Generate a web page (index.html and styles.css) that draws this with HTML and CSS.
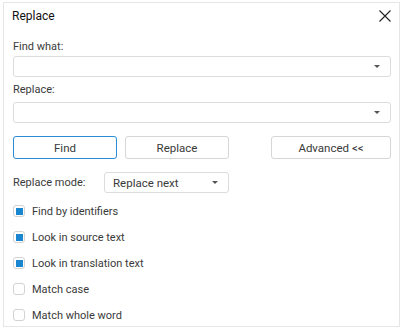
FILE: index.html
```html
<!DOCTYPE html>
<html lang="en">
    <head>
        <meta charset="UTF-8">
        <title>Replace</title>
        <link rel="stylesheet" href="styles.css">
    </head>
    <body>
        <div class="dialog">
            <div class="dialogHeader">
                <span class="dialogTitle">Replace</span>
                <svg class="closeIcon" width="12" height="12" viewBox="0 0 12 12">
                    <path d="M0.5 0.5 L11.5 11.5 M11.5 0.5 L0.5 11.5" stroke="#222" stroke-width="1.1" fill="none"/>
                </svg>
            </div>

            <label class="fieldLabel firstLabel">Find what:</label>
            <div class="comboBox">
                <span class="comboText"></span>
                <span class="comboArrow"></span>
            </div>

            <label class="fieldLabel">Replace:</label>
            <div class="comboBox">
                <span class="comboText"></span>
                <span class="comboArrow"></span>
            </div>

            <div class="buttonRow">
                <button class="dialogButton primaryButton">Find</button>
                <button class="dialogButton">Replace</button>
                <button class="dialogButton advancedButton">Advanced &lt;&lt;</button>
            </div>

            <div class="modeRow">
                <span class="modeLabel">Replace mode:</span>
                <div class="comboBox modeSelect">
                    <span class="comboText">Replace next</span>
                    <span class="comboArrow"></span>
                </div>
            </div>

            <div class="checkList">
                <div class="checkRow"><span class="checkBox checked"></span>Find by identifiers</div>
                <div class="checkRow"><span class="checkBox checked"></span>Look in source text</div>
                <div class="checkRow"><span class="checkBox checked"></span>Look in translation text</div>
                <div class="checkRow"><span class="checkBox"></span>Match case</div>
                <div class="checkRow"><span class="checkBox"></span>Match whole word</div>
            </div>
        </div>
    </body>
</html>
```

FILE: styles.css
```css
html, body
{
    margin: 0;
    background-color: white;
    font-family: Roboto, "Noto Sans", sans-serif;
    font-size: 11px;
    color: #3a3a3a;
}

.dialog
{
    box-sizing: border-box;
    width: 397px;
    height: 325px;
    margin: 2px 0 0 3px;
    border: 1px solid #e6e6e6;
    padding: 0 8px 0 9px;
    display: flex;
    flex-direction: column;
    overflow: hidden;
}

/*keep every row at its own height*/
.dialog > *
{
    flex-shrink: 0;
}

.dialogHeader
{
    height: 26px;
    display: flex;
    align-items: center;
    justify-content: space-between;
}

.dialogTitle
{
    font-size: 12px;
    color: #111;
    margin-left: -1px;
}

.fieldLabel
{
    display: block;
    height: 16px;
    line-height: 16px;
    margin-top: 5px;
    margin-bottom: 4px;
}

.firstLabel
{
    margin-top: 10px;
    margin-bottom: 1px;
}

.comboBox
{
    box-sizing: border-box;
    height: 21px;
    border: 1px solid #dcdcdc;
    border-radius: 3px;
    display: flex;
    align-items: center;
    justify-content: space-between;
    padding: 0 10px 0 7px;
}

.comboText
{
    font-size: 11.5px;
}

.comboArrow
{
    width: 0;
    height: 0;
    border-left: 3px solid transparent;
    border-right: 3px solid transparent;
    border-top: 3px solid #555;
}

.buttonRow
{
    display: flex;
    margin-top: 13px;
    height: 23px;
}

.dialogButton
{
    box-sizing: border-box;
    width: 104px;
    height: 23px;
    background-color: white;
    border: 1px solid #d6d6d6;
    border-radius: 3px;
    font-family: inherit;
    font-size: 11.5px;
    color: #3a3a3a;
    padding: 0;
    margin-right: 8px;
}

.primaryButton
{
    border-color: #2a8bd6;
}

.advancedButton
{
    width: 120px;
    margin-left: auto;
    margin-right: 0;
}

.modeRow
{
    display: flex;
    align-items: center;
    margin-top: 13px;
}

.modeLabel
{
    width: 91px;
}

.modeSelect
{
    width: 125px;
    padding-left: 8px;
}

.checkList
{
    margin-top: 5px;
}

.checkRow
{
    height: 26px;
    display: flex;
    align-items: center;
}

.checkBox
{
    box-sizing: border-box;
    width: 12px;
    height: 12px;
    border: 1px solid #d3d3d3;
    border-radius: 3px;
    margin-right: 7px;
    display: flex;
    align-items: center;
    justify-content: center;
}

.checkBox.checked::after
{
    content: "";
    width: 7px;
    height: 7px;
    background-color: #1b86d0;
}
```
